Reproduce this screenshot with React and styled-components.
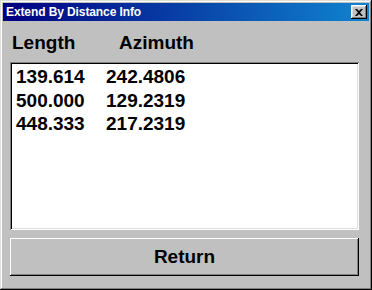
import React from 'react'
import styled, { createGlobalStyle } from 'styled-components'

const GlobalStyle = createGlobalStyle`
    html, body {
        margin: 0;
        padding: 0;
        background: #c0c0c0;
    }
    body {
        font-family: "Liberation Sans", Arial, sans-serif;
    }
`

const Window = styled.div`
    width: 372px;
    height: 290px;
    box-sizing: border-box;
    padding: 3px;
    background: #c0c0c0;
    box-shadow: inset -1px -1px #000, inset 1px 1px #dfdfdf,
        inset -2px -2px #808080, inset 2px 2px #fff;
    display: flex;
    flex-direction: column;
`

const TitleBar = styled.div`
    height: 18px;
    display: flex;
    align-items: center;
    justify-content: space-between;
    padding: 0 2px 0 3px;
    background: linear-gradient(90deg, #000080, #1084d0);
`

const Title = styled.span`
    color: #fff;
    font-weight: bold;
    font-size: 12px;
    letter-spacing: -0.1px;
`

const CloseButton = styled.button`
    width: 16px;
    height: 14px;
    padding: 0;
    border: none;
    background: #c0c0c0;
    box-shadow: inset -1px -1px #000, inset 1px 1px #fff,
        inset -2px -2px #808080, inset 2px 2px #dfdfdf;
    display: flex;
    align-items: center;
    justify-content: center;
`

const Body = styled.div`
    flex: 1;
    display: flex;
    flex-direction: column;
    padding: 11px 10px 11px 7px;
`

const HeaderRow = styled.div`
    display: flex;
    padding-left: 2px;
    font-size: 19px;
    font-weight: bold;
    line-height: 22px;
    color: #000;
`

const HeaderCell = styled.span`
    width: ${props => props.width}px;
`

const ListBox = styled.div`
    margin-top: 8px;
    height: 168px;
    box-sizing: border-box;
    padding: 1px 4px;
    background: #fff;
    box-shadow: inset 1px 1px #808080, inset -1px -1px #fff,
        inset 2px 2px #000, inset -2px -2px #dfdfdf;
    border: none;
    padding-top: 3px;
    padding-left: 6px;
`

const Row = styled.div`
    display: flex;
    font-size: 19px;
    font-weight: bold;
    line-height: 23.5px;
    color: #000;
`

const Cell = styled.span`
    width: ${props => props.width}px;
`

const ReturnButton = styled.button`
    margin-top: 8px;
    height: 38px;
    width: 349px;
    border: none;
    padding: 0;
    background: #c0c0c0;
    font-family: "Liberation Sans", Arial, sans-serif;
    font-size: 19px;
    font-weight: bold;
    color: #000;
    box-shadow: inset -1px -1px #000, inset 1px 1px #fff,
        inset -2px -2px #808080, inset 2px 2px #c0c0c0;
    display: flex;
    align-items: center;
    justify-content: center;
`

const rows = [
    ['139.614', '242.4806'],
    ['500.000', '129.2319'],
    ['448.333', '217.2319'],
]

const CloseIcon = () => (
    <svg width="8" height="7" viewBox="0 0 8 7">
        <path d="M0 0h2l2 2 2-2h2L5 3.5 8 7H6L4 5 2 7H0l3-3.5z" fill="#000" />
    </svg>
)

const App = () => (
    <>
        <GlobalStyle />
        <Window>
            <TitleBar>
                <Title>Extend By Distance Info</Title>
                <CloseButton><CloseIcon /></CloseButton>
            </TitleBar>
            <Body>
                <HeaderRow>
                    <HeaderCell width={107}>Length</HeaderCell>
                    <HeaderCell>Azimuth</HeaderCell>
                </HeaderRow>
                <ListBox>
                    {rows.map(([len, az]) => (
                        <Row key={len}>
                            <Cell width={90}>{len}</Cell>
                            <Cell>{az}</Cell>
                        </Row>
                    ))}
                </ListBox>
                <ReturnButton>Return</ReturnButton>
            </Body>
        </Window>
    </>
)

export default App
